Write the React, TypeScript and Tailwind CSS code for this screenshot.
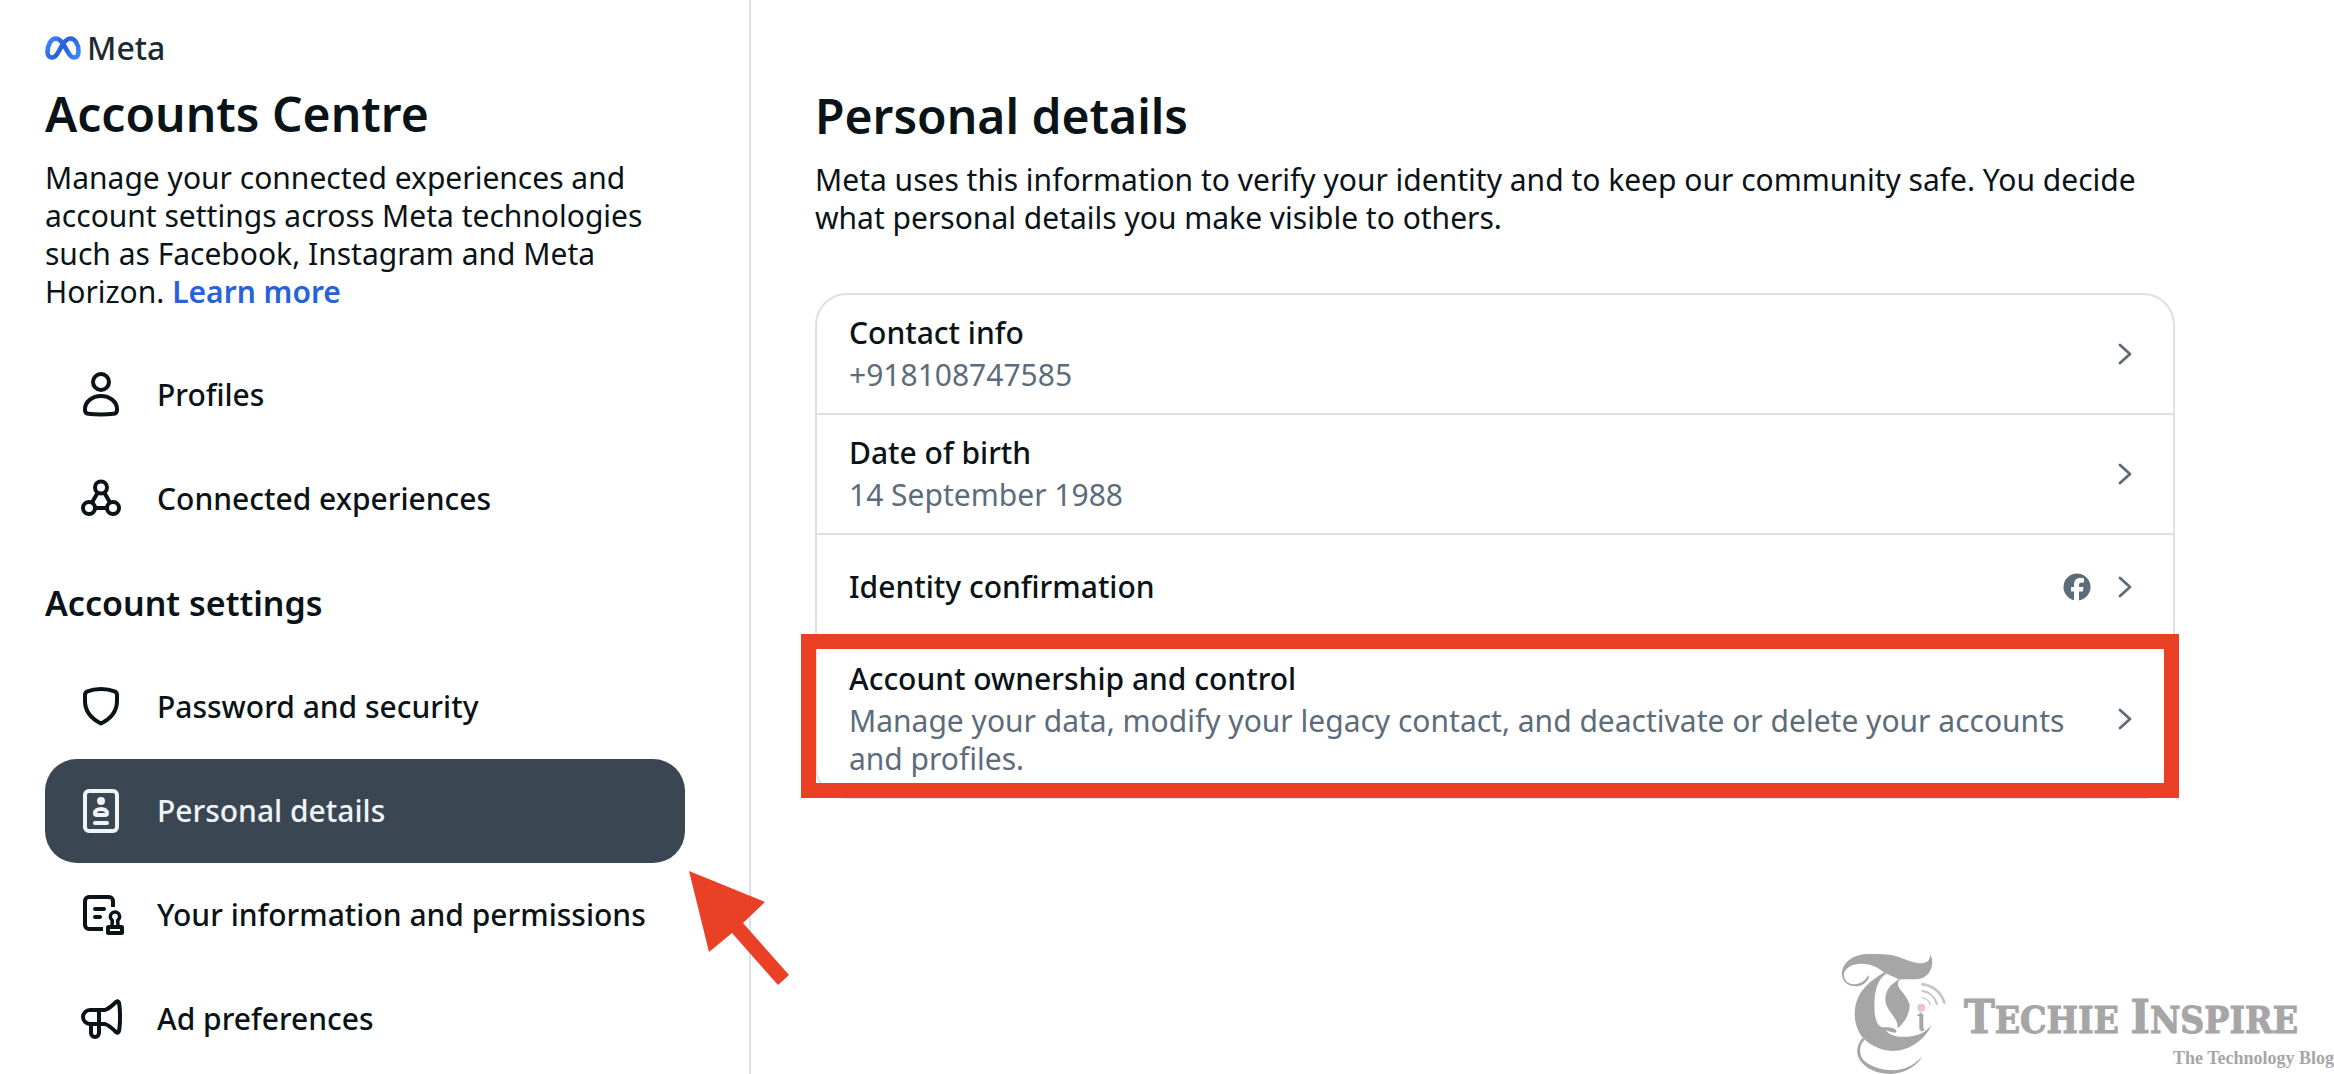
import type { ReactNode } from "react";

type NavItem = {
  label: string;
  icon: ReactNode;
  active?: boolean;
};

type DetailRow = {
  title: string;
  value?: string;
  facebook?: boolean;
  highlighted?: boolean;
};

function NavIcon({ children }: { children: ReactNode }) {
  return (
    <svg
      className="w-12 h-12 shrink-0"
      viewBox="0 0 48 48"
      fill="none"
      stroke="currentColor"
      strokeWidth={4}
      strokeLinecap="round"
      strokeLinejoin="round"
      aria-hidden="true"
    >
      {children}
    </svg>
  );
}

const mainItems: NavItem[] = [
  {
    label: "Profiles",
    icon: (
      <NavIcon>
        <circle cx="24" cy="11" r="8" />
        <path d="M24 25C15 25 8 31 8 38v1.3c0 2.2 1 3.2 3.2 3.5 4 .5 8 .7 12.8.7s8.8-.2 12.8-.7c2.2-.3 3.2-1.3 3.2-3.5V38c0-7-7-13-16-13z" />
      </NavIcon>
    ),
  },
  {
    label: "Connected experiences",
    icon: (
      <NavIcon>
        <circle cx="24" cy="12.5" r="6" />
        <circle cx="12" cy="33" r="6" />
        <circle cx="36" cy="33" r="6" />
        <path d="M20.5 18l-5.5 9.5M27.5 18l5.5 9.5M18 33h12" />
      </NavIcon>
    ),
  },
];

const settingsItems: NavItem[] = [
  {
    label: "Password and security",
    icon: (
      <NavIcon>
        <path d="M8 12c0-2 .8-3 2.5-3.6C14.5 6.7 19 6 24 6s9.5.7 13.5 2.4C39.2 9 40 10 40 12v6c0 9.500-6 17.500-16 22.500C14 35.500 8 27.500 8 18z" />
      </NavIcon>
    ),
  },
  {
    label: "Personal details",
    active: true,
    icon: (
      <NavIcon>
        <rect x="8" y="4" width="32" height="40" rx="4" />
        <circle cx="24" cy="14" r="4" fill="currentColor" stroke="none" />
        <path d="M24 22c-3.500 0-6 1.700-6 4.200 0 1.300.7 1.800 2 1.800h8c1.300 0 2-.5 2-1.800 0-2.500-2.500-4.200-6-4.200z" />
        <path d="M18 36h12" />
      </NavIcon>
    ),
  },
  {
    label: "Your information and permissions",
    icon: (
      <NavIcon>
        <path d="M36 16v-6a4 4 0 0 0-4-4H12a4 4 0 0 0-4 4v24a4 4 0 0 0 4 4h14" strokeLinecap="butt" />
        <path d="M18 18h9M18 26h5" />
        <path d="M35 35l.3-5.500c-1.200-1.300-2-2.400-2-3.800a4.700 4.700 0 0 1 9.400 0c0 1.400-.8 2.500-2 3.800l.3 5.500" strokeWidth={3.5} />
        <rect x="31" y="36" width="14" height="6" rx="0.500" />
      </NavIcon>
    ),
  },
  {
    label: "Ad preferences",
    icon: (
      <NavIcon>
        <path d="M28 29H13a7 7 0 0 1 0-14h15c4-1.500 8-5 11-8 1.500-1.300 2.700-.8 3 1 .8 4 1 9 1 14s-.2 10-1 14c-.3 1.800-1.500 2.300-3 1-3-3-7-6.500-11-8z" />
        <path d="M22 15v23a4 4 0 0 1-8 0V29" />
      </NavIcon>
    ),
  },
];

const rows: DetailRow[] = [
  { title: "Contact info", value: "+918108747585" },
  { title: "Date of birth", value: "14 September 1988" },
  { title: "Identity confirmation", facebook: true },
  {
    title: "Account ownership and control",
    value: "Manage your data, modify your legacy contact, and deactivate or delete your accounts and profiles.",
    highlighted: true,
  },
];

function MetaLogo() {
  return (
    <div className="flex items-center gap-1.5 h-6">
      <svg className="w-9 h-6" viewBox="0 0 36 24" fill="none" aria-hidden="true">
        <defs>
          <linearGradient id="meta-blue" x1="0" x2="1" y1="0.3" y2="0.7">
            <stop offset="0" stopColor="#3b82f6" />
            <stop offset="0.25" stopColor="#2f6fe6" />
            <stop offset="0.5" stopColor="#2860d8" />
            <stop offset="0.75" stopColor="#2f6fe6" />
            <stop offset="1" stopColor="#3b82f6" />
          </linearGradient>
        </defs>
        <path
          d="M2.5 16.5C2.5 9 6 2.5 10.8 2.5c4 0 6.5 4 9.2 8.5s5 10.5 8.700 10.500c3 0 4.800-2 4.800-6.500C33.500 8 30 2.500 25.500 2.500c-3.500 0-6 3-8.500 7s-5.500 12-9.700 12c-3 0-4.800-2-4.800-5z"
          stroke="url(#meta-blue)"
          strokeWidth={4.6}
        />
      </svg>
      <span className="text-[32px] leading-6 font-medium text-[#1c2b33]">Meta</span>
    </div>
  );
}

function NavLink({ item }: { item: NavItem }) {
  return (
    <li className="relative">
      <a
        href="#"
        aria-current={item.active ? "page" : undefined}
        className={`flex items-center gap-8 h-[104px] px-8 rounded-[32px] font-medium ${
          item.active ? "bg-[#3a4753] text-[#f1f4f7]" : ""
        }`}
      >
        {item.icon}
        <span>{item.label}</span>
      </a>
      {item.active && (
        <svg
          className="absolute z-10 left-full top-28 ml-1 w-[100px] h-[114px]"
          viewBox="0 0 100 114"
          fill="#ea4025"
          aria-hidden="true"
        >
          <path d="M0 0l76 31-22 21 46 52-11 10-46-52-23 19z" />
        </svg>
      )}
    </li>
  );
}

function Chevron() {
  return (
    <svg
      className="w-6 h-6 shrink-0"
      viewBox="0 0 24 24"
      fill="none"
      stroke="currentColor"
      strokeWidth={2.8}
      strokeLinecap="round"
      strokeLinejoin="round"
      aria-hidden="true"
    >
      <path d="M7 3l10 9-10 9" />
    </svg>
  );
}

function FacebookIcon() {
  return (
    <svg className="w-7 h-7 shrink-0" viewBox="0 0 28 28" role="img" aria-label="Facebook">
      <circle cx="14" cy="14" r="13.5" fill="currentColor" />
      <path d="M11 28v-9.500H8V14h3v-2c0-4.700 2.200-7 6.500-7 1.200 0 2.500.1 3.500.4v4.100c-.6-.1-1.200-.1-2-.1-2.200 0-3 .8-3 3V14h4.600l-.8 4.500H16V28z" fill="#fff" />
    </svg>
  );
}

function Row({ row }: { row: DetailRow }) {
  return (
    <li className="relative">
      <button type="button" className="flex items-center gap-[22px] w-full min-h-[104px] py-[19px] pl-8 pr-9 text-left text-[#5d6c7b]">
        <span className="flex-1 flex flex-col gap-1">
          <span className="font-medium text-[#0a1317]">{row.title}</span>
          {row.value && <span>{row.value}</span>}
        </span>
        {row.facebook && <FacebookIcon />}
        <Chevron />
      </button>
      {row.highlighted && (
        <div className="absolute z-10 -left-4 -right-1.5 -top-[7px] -bottom-px border-[15px] border-[#ea4025] pointer-events-none"></div>
      )}
    </li>
  );
}

function Watermark() {
  return (
    <div className="absolute right-0 bottom-0 flex items-start text-[#a6a6a6]">
      <svg className="w-[130px] h-[129px]" viewBox="0 0 390 387" fill="currentColor" aria-hidden="true">
        <path d="M287 27C294 36 297 50 293 66C287 88 270 102 247 103L195 103C180 96 165 90 150 82C130 65 105 55 80 56C45 58 28 75 30 92C32 112 50 120 68 117C85 114 95 104 103 91C105 95 105 97 104 99C97 114 85 124 66 124C42 124 24 110 24 88C24 50 60 27 105 27C150 26 175 28 200 38C225 48 250 57 268 54C285 50 290 42 287 27Z" />
        <path d="M150 82C125 100 64 130 62 205C62 240 75 265 88 280C105 298 140 318 175 318C230 318 275 280 293 240C280 255 270 262 258 267C240 274 215 277 195 275C175 273 162 265 155 256C168 260 178 265 186 262C190 258 185 253 178 250C165 244 150 248 142 246C120 235 120 190 122 160C125 120 140 95 158 86Z" />
        <path d="M195 103C170 118 154 135 154 165C156 190 175 205 187 228C191 236 190 243 192 250C215 228 227 205 227 180C222 158 205 142 195 128C190 118 190 110 200 103Z" />
        <path d="M86 278C68 298 64 325 78 346C95 372 130 387 172 387C215 385 250 362 265 334C240 362 210 376 178 376C140 376 105 362 88 345C75 328 74 300 92 284Z" />
        <path d="M248 213L260 202L270 213L268 214L268 248L272 254L263 260L256 252L256 214Z" />
        <circle cx="262" cy="188" r="12" fill="#ebc4c4" />
        <g fill="none" stroke="#c6c6c6" strokeLinecap="round">
          <path d="M265 118C295 120 322 142 331 173" strokeWidth={8} />
          <path d="M265 138C285 140 302 155 309 178" strokeWidth={6} />
          <path d="M265 158C275 160 285 168 289 178" strokeWidth={4} />
        </g>
      </svg>
      <div className="flex flex-col pt-12 font-bold">
        <span className="pr-9 text-[37px] leading-[48px] font-['DejaVu_Serif_Condensed','DejaVu_Serif',serif] [-webkit-text-stroke:1px_#a6a6a6]">
          <span className="text-[46px]">T</span>ECHIE <span className="text-[46px]">I</span>NSPIRE
        </span>
        <span className="text-[18px] leading-7 text-right font-['Liberation_Serif',serif]">The Technology Blog</span>
      </div>
    </div>
  );
}

export default function App() {
  return (
    <div className="relative flex min-h-screen bg-white text-[#0a1317] text-[30px] leading-[38px] font-['Noto_Sans',sans-serif]">
      <aside className="w-[751px] shrink-0 border-r-2 border-[#dee0e7] pt-9 pl-[45px] pr-16">
        <MetaLogo />
        <h1 className="mt-6 text-[48px] leading-[59px] font-semibold">Accounts Centre</h1>
        <p className="mt-4">
          Manage your connected experiences and account settings across Meta technologies such as Facebook, Instagram
          and Meta Horizon.{" "}
          <a href="#" className="font-semibold text-[#2762da]">
            Learn more
          </a>
        </p>
        <nav className="mt-8">
          <ul>
            {mainItems.map((item) => (
              <NavLink key={item.label} item={item} />
            ))}
          </ul>
          <h2 className="flex items-center h-[104px] text-[34px] font-semibold">Account settings</h2>
          <ul>
            {settingsItems.map((item) => (
              <NavLink key={item.label} item={item} />
            ))}
          </ul>
        </nav>
      </aside>

      <main className="flex-1 pt-[86px] px-16">
        <div className="max-w-[1360px]">
          <h2 className="text-[48px] leading-[59px] font-semibold">Personal details</h2>
          <p className="mt-4">
            Meta uses this information to verify your identity and to keep our community safe. You decide what personal
            details you make visible to others.
          </p>
          <ul className="mt-14 border-2 border-[#dee0e7] rounded-[32px] divide-y-2 divide-[#dee0e7]">
            {rows.map((row) => (
              <Row key={row.title} row={row} />
            ))}
          </ul>
        </div>
      </main>

      <Watermark />
    </div>
  );
}
